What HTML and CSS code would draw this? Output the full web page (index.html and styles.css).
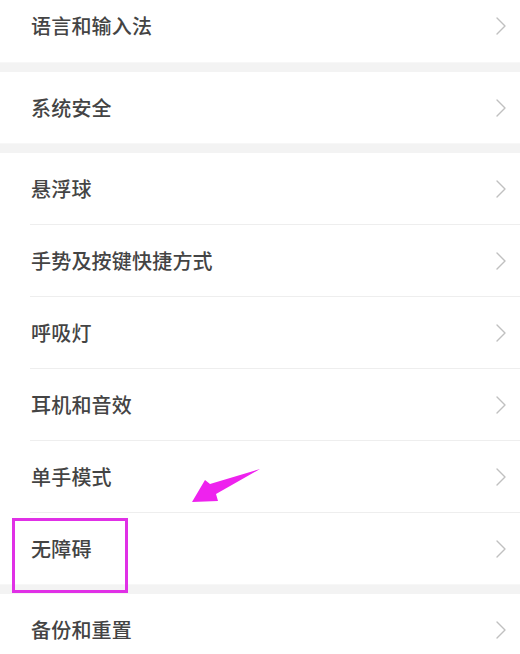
FILE: index.html
```html
<!DOCTYPE html>
<html lang="zh-CN">
<head>
<meta charset="utf-8">
<title>设置</title>
<link rel="stylesheet" href="styles.css">
</head>
<body>
<div class="page">
  <div class="group first">
    <div class="row"><span class="label">语言和输入法</span><svg class="chev" viewBox="0 0 10 18"><polyline points="1,1 9,9 1,17"/></svg></div>
  </div>
  <div class="band"></div>
  <div class="group">
    <div class="row h71"><span class="label">系统安全</span><svg class="chev" viewBox="0 0 10 18"><polyline points="1,1 9,9 1,17"/></svg></div>
  </div>
  <div class="band"></div>
  <div class="group">
    <div class="row sep"><span class="label">悬浮球</span><svg class="chev" viewBox="0 0 10 18"><polyline points="1,1 9,9 1,17"/></svg></div>
    <div class="row sep"><span class="label">手势及按键快捷方式</span><svg class="chev" viewBox="0 0 10 18"><polyline points="1,1 9,9 1,17"/></svg></div>
    <div class="row sep"><span class="label">呼吸灯</span><svg class="chev" viewBox="0 0 10 18"><polyline points="1,1 9,9 1,17"/></svg></div>
    <div class="row sep"><span class="label">耳机和音效</span><svg class="chev" viewBox="0 0 10 18"><polyline points="1,1 9,9 1,17"/></svg></div>
    <div class="row sep"><span class="label">单手模式</span><svg class="chev" viewBox="0 0 10 18"><polyline points="1,1 9,9 1,17"/></svg></div>
    <div class="row h71"><span class="label">无障碍</span><svg class="chev" viewBox="0 0 10 18"><polyline points="1,1 9,9 1,17"/></svg></div>
  </div>
  <div class="band"></div>
  <div class="group">
    <div class="row"><span class="label">备份和重置</span><svg class="chev" viewBox="0 0 10 18"><polyline points="1,1 9,9 1,17"/></svg></div>
  </div>

  <div class="highlight"></div>
  <svg class="arrow" viewBox="0 0 520 654" width="520" height="654">
    <polygon points="192,502 205,480 210,484 260,469 216,494 218,501"/>
  </svg>
</div>
</body>
</html>
```

FILE: styles.css
```css
html, body {
  margin: 0;
  padding: 0;
  background: #ffffff;
}

body {
  font-family: "Noto Sans CJK SC", "Noto Sans", sans-serif;
  overflow: hidden;
}

.page {
  position: relative;
  width: 520px;
  height: 654px;
  overflow: hidden;
}

.group {
  background: #ffffff;
}

.group.first {
  margin-top: -10px;
}

.row {
  box-sizing: border-box;
  height: 72px;
  display: flex;
  align-items: center;
  justify-content: space-between;
  padding: 0 14px 0 31px;
  position: relative;
}

.row.h71 {
  height: 71px;
}

.row.sep::after {
  content: "";
  position: absolute;
  left: 30px;
  right: 0;
  bottom: 0;
  height: 1px;
  background: #eeeeee;
}

.label {
  font-size: 20px;
  font-weight: 500;
  line-height: 1;
  color: #444444;
  letter-spacing: 0.2px;
}

.chev {
  width: 10px;
  height: 18px;
  fill: none;
  stroke: #c0c0c0;
  stroke-width: 1.4;
  stroke-linecap: round;
  stroke-linejoin: round;
}

.band {
  height: 10px;
  background: #f3f3f3;
  border-top: 1px solid #f7f7f7;
  box-sizing: border-box;
}

.highlight {
  position: absolute;
  left: 12px;
  top: 518px;
  width: 116px;
  height: 75px;
  box-sizing: border-box;
  border: 3px solid #e030e6;
}

.arrow {
  position: absolute;
  left: 0;
  top: 0;
  fill: #ee22ee;
}
```
